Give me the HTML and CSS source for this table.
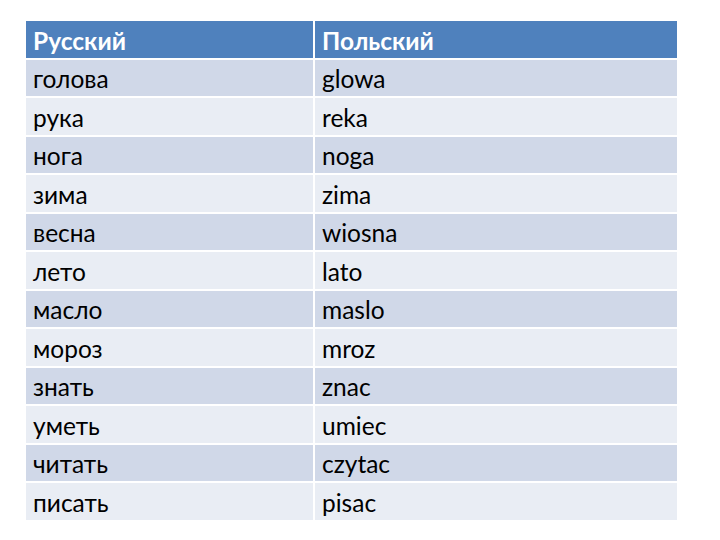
FILE: index.html
```html
<!DOCTYPE html>
<html lang="ru">
<head>
<meta charset="utf-8">
<link rel="stylesheet" href="styles.css">
</head>
<body>
<div class="table">
  <div class="cell head">Русский</div><div class="cell head">Польский</div>
  <div class="cell odd">голова</div><div class="cell odd">glowa</div>
  <div class="cell even">рука</div><div class="cell even">reka</div>
  <div class="cell odd">нога</div><div class="cell odd">noga</div>
  <div class="cell even">зима</div><div class="cell even">zima</div>
  <div class="cell odd">весна</div><div class="cell odd">wiosna</div>
  <div class="cell even">лето</div><div class="cell even">lato</div>
  <div class="cell odd">масло</div><div class="cell odd">maslo</div>
  <div class="cell even">мороз</div><div class="cell even">mroz</div>
  <div class="cell odd">знать</div><div class="cell odd">znac</div>
  <div class="cell even">уметь</div><div class="cell even">umiec</div>
  <div class="cell odd">читать</div><div class="cell odd">czytac</div>
  <div class="cell even">писать</div><div class="cell even">pisac</div>
</div>
</body>
</html>
```
FILE: styles.css
```css
html, body { margin: 0; padding: 0; background: #ffffff; }
body { padding: 21px 0 0 26px; }
.table {
  display: grid;
  grid-template-columns: 287px 362px;
  grid-auto-rows: 36.5px;
  gap: 2px 2px;
  width: 651px;
  font-family: Lato, "Open Sans", sans-serif;
  font-size: 24.5px;
  color: #000;
}
.cell {
  display: flex;
  align-items: center;
  padding: 2px 0 0 7px;
}
.head { background: #4f81bd; color: #fff; font-weight: bold; }
.odd { background: #d0d8e8; }
.even { background: #e9edf4; }
```
